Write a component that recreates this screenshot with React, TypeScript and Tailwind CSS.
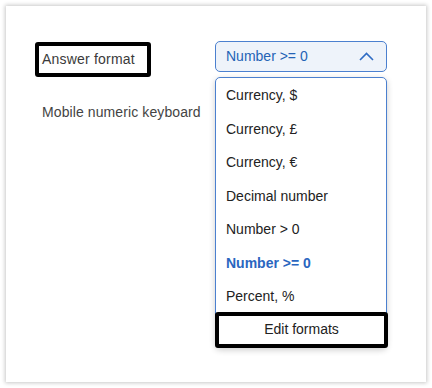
import { useState } from "react";

const formats = [
  "Currency, $",
  "Currency, £",
  "Currency, €",
  "Decimal number",
  "Number > 0",
  "Number >= 0",
  "Percent, %",
];

export default function App() {
  const [selected, setSelected] = useState("Number >= 0");
  const [open, setOpen] = useState(true);

  return (
    <div className="min-h-[388px] bg-white p-[6px] font-['Liberation_Sans',Arial,sans-serif]">
      <div className="h-[376px] w-[420px] bg-white pl-[29px] pt-[35px] shadow-[0_0_4px_1px_rgba(0,0,0,0.22)]">
        {/* Answer format row */}
        <div className="flex">
          <div className="w-[180px]">
            <div className="mt-px flex h-[35px] w-[116px] items-center rounded-[3px] border-4 border-black pl-[3px] text-[14px] tracking-[0.2px] text-[#3a3a3a]">
              Answer format
            </div>
          </div>
          <div className="relative w-[172px]">
            <button
              onClick={() => setOpen(!open)}
              className="flex h-[31px] w-full items-center justify-between rounded-[5px] border border-[#4b80cf] bg-[#eef3fa] pl-[10px] pr-[12px] text-[14px] text-[#2463b6]"
            >
              <span>{selected}</span>
              <svg width="15" height="9" viewBox="0 0 15 9" fill="none">
                <path d="M1 8 L7.5 1.5 L14 8" stroke="#2f6cc4" strokeWidth="1.6" />
              </svg>
            </button>

            {open && (
              <div className="absolute left-0 top-[36px] z-10 w-[172px] rounded-[5px] border border-[#4b80cf] bg-white pt-px shadow-[0_2px_6px_rgba(0,0,0,0.2)]">
                {formats.map((f) => (
                  <div
                    key={f}
                    onClick={() => {
                      setSelected(f);
                      setOpen(false);
                    }}
                    className={`flex h-[33.5px] items-center pl-[10px] text-[14px] ${
                      f === selected ? "font-bold text-[#2a66c0]" : "text-[#222]"
                    }`}
                  >
                    {f}
                  </div>
                ))}
                <button className="-mx-px -mb-px -mt-[2px] flex h-[36px] w-[173px] items-center justify-center rounded-[3px] border-4 border-black bg-white text-[14px] text-[#222]">
                  Edit formats
                </button>
              </div>
            )}
          </div>
        </div>

        {/* Mobile numeric keyboard row */}
        <div className="mt-[25px] pl-[7px] text-[14px] tracking-[0.1px] text-[#444]">Mobile numeric keyboard</div>
      </div>
    </div>
  );
}
